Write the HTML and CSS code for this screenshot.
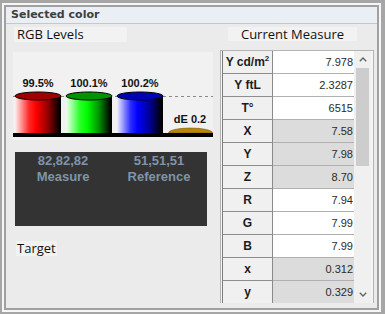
FILE: index.html
```html
<!DOCTYPE html>
<html>
<head>
<meta charset="utf-8">
<link rel="stylesheet" href="styles.css">
</head>
<body>
<div class="frame">
  <div class="panel">
    <div class="title">Selected color</div>
    <div class="content">
      <div class="left">
        <div class="label rgb">RGB Levels</div>
        <svg class="chart" width="200" height="88" viewBox="0 0 200 88">
          <defs>
            <linearGradient id="gr" x1="0" x2="1" y1="0" y2="0">
              <stop offset="0" stop-color="#ffeeee"/>
              <stop offset="0.3" stop-color="#ff2a2a"/>
              <stop offset="0.45" stop-color="#ff0000"/>
              <stop offset="0.72" stop-color="#900000"/>
              <stop offset="0.97" stop-color="#000000"/>
            </linearGradient>
            <linearGradient id="gg" x1="0" x2="1" y1="0" y2="0">
              <stop offset="0" stop-color="#eeffee"/>
              <stop offset="0.3" stop-color="#2aff2a"/>
              <stop offset="0.45" stop-color="#00ff00"/>
              <stop offset="0.72" stop-color="#009000"/>
              <stop offset="0.97" stop-color="#000000"/>
            </linearGradient>
            <linearGradient id="gb" x1="0" x2="1" y1="0" y2="0">
              <stop offset="0" stop-color="#eeeeff"/>
              <stop offset="0.3" stop-color="#2a2aff"/>
              <stop offset="0.45" stop-color="#0000ff"/>
              <stop offset="0.72" stop-color="#000090"/>
              <stop offset="0.97" stop-color="#000000"/>
            </linearGradient>
          </defs>
          <rect x="0" y="0" width="200" height="88" fill="#f1f1f1"/>
          <line x1="0" y1="44.5" x2="200" y2="44.5" stroke="#8a8a8a" stroke-width="1" stroke-dasharray="3 3"/>
          <rect x="2" y="44" width="46" height="37" fill="url(#gr)"/>
          <ellipse cx="25" cy="44" rx="23" ry="4" fill="#a00000" stroke="#000" stroke-width="1"/>
          <rect x="53" y="44" width="46" height="37" fill="url(#gg)"/>
          <ellipse cx="76" cy="44" rx="23" ry="4" fill="#009400" stroke="#000" stroke-width="1"/>
          <rect x="104" y="44" width="46" height="37" fill="url(#gb)"/>
          <ellipse cx="127" cy="44" rx="23" ry="4" fill="#0000b4" stroke="#000" stroke-width="1"/>
          <path d="M155.5 81 A22 5 0 0 1 199.5 81 Z" fill="#b8860b" stroke="#7a5a08" stroke-width="0.6"/>
          <rect x="0" y="81" width="200" height="4" fill="#000"/>
          <text class="pct" x="25" y="35" text-anchor="middle">99.5%</text>
          <text class="pct" x="76" y="35" text-anchor="middle">100.1%</text>
          <text class="pct" x="127" y="35" text-anchor="middle">100.2%</text>
          <text class="pct" x="177" y="71" text-anchor="middle">dE 0.2</text>
        </svg>
        <div class="swatch">
          <div class="sw-col"><span>82,82,82</span><span>Measure</span></div>
          <div class="sw-col"><span>51,51,51</span><span>Reference</span></div>
        </div>
        <div class="label target">Target</div>
      </div>
      <div class="right">
        <div class="label cm">Current Measure</div>
        <div class="table-wrap">
          <div class="grid">
            <div class="row"><div class="k">Y cd/m<sup>2</sup></div><div class="v">7.978</div></div>
            <div class="row"><div class="k">Y ftL</div><div class="v">2.3287</div></div>
            <div class="row"><div class="k">T°</div><div class="v">6515</div></div>
            <div class="row alt"><div class="k">X</div><div class="v">7.58</div></div>
            <div class="row alt"><div class="k">Y</div><div class="v">7.98</div></div>
            <div class="row alt"><div class="k">Z</div><div class="v">8.70</div></div>
            <div class="row"><div class="k">R</div><div class="v">7.94</div></div>
            <div class="row"><div class="k">G</div><div class="v">7.99</div></div>
            <div class="row"><div class="k">B</div><div class="v">7.99</div></div>
            <div class="row alt"><div class="k">x</div><div class="v">0.312</div></div>
            <div class="row alt"><div class="k">y</div><div class="v">0.329</div></div>
          </div>
          <div class="scroll">
            <div class="arrow"><svg width="8" height="5" viewBox="0 0 8 5"><path d="M0.8 4.2 L4 1 L7.2 4.2" fill="none" stroke="#606060" stroke-width="1.3"/></svg></div>
            <div class="track"><div class="thumb"></div></div>
            <div class="arrow"><svg width="8" height="5" viewBox="0 0 8 5"><path d="M0.8 0.8 L4 4 L7.2 0.8" fill="none" stroke="#606060" stroke-width="1.3"/></svg></div>
          </div>
        </div>
      </div>
    </div>
  </div>
</div>
</body>
</html>
```
FILE: styles.css
```css
html, body {
  margin: 0;
  padding: 0;
  width: 385px;
  height: 314px;
  overflow: hidden;
  background: #a6a6a6;
}

.frame {
  margin: 3px 4px 0 2px;
  width: 379px;
  height: 309px;
  box-sizing: border-box;
  border: 2px solid #f6f6f6;
}

.panel {
  height: 100%;
  box-sizing: border-box;
  border: 2px solid #a0a0a0;
  background: #ebebeb;
  display: flex;
  flex-direction: column;
  overflow: hidden;
}

.title {
  height: 16px;
  line-height: 16px;
  flex: none;
  background: #eaeff6;
  border-bottom: 1px solid #c4c8cc;
  padding-left: 5px;
  font-family: "DejaVu Sans", sans-serif;
  font-weight: bold;
  font-size: 11px;
  color: #3e3e3e;
}

.content {
  flex: 1;
  display: flex;
  min-height: 0;
}

.left {
  width: 210px;
  flex: none;
  display: flex;
  flex-direction: column;
  align-items: flex-start;
}

.label {
  font-family: "Open Sans", sans-serif;
  font-size: 13px;
  color: #111;
  background: #f2f2f2;
  box-sizing: border-box;
  height: 15px;
  line-height: 15px;
}

.rgb {
  margin: 3px 0 0 8px;
  width: 113px;
  padding-left: 3px;
}

.chart {
  display: block;
  margin: 10px 0 0 7px;
}

.pct {
  font-family: "Liberation Sans", sans-serif;
  font-weight: bold;
  font-size: 11px;
  fill: #111;
}

.swatch {
  margin: 12px 0 0 9px;
  width: 192px;
  height: 74px;
  background: #333333;
  display: flex;
}

.sw-col {
  flex: 1;
  display: flex;
  flex-direction: column;
  align-items: center;
  padding-top: 1px;
  font-family: "Liberation Sans", sans-serif;
  font-weight: bold;
  font-size: 13px;
  line-height: 16px;
  color: #7f93aa;
}

.target {
  margin: 15px 0 0 10px;
  padding: 0 1px;
}

.right {
  flex: 1;
  display: flex;
  flex-direction: column;
  align-items: flex-start;
}

.cm {
  margin: 3px 0 0 12px;
  width: 129px;
  text-align: center;
  height: 14px;
  line-height: 14px;
}

.table-wrap {
  margin: 9px 0 0 4px;
  width: 154px;
  height: 253px;
  box-sizing: border-box;
  border: 1px solid #b4b4b4;
  border-bottom: none;
  padding-left: 1px;
  background: #f4f4f4;
  display: flex;
  overflow: hidden;
}

.grid {
  width: 131px;
  flex: none;
  border-left: 1px solid #7c7c7c;
  display: flex;
  flex-direction: column;
}

.row {
  display: flex;
  height: 23px;
  flex: none;
}

.k {
  width: 50px;
  box-sizing: border-box;
  background: #f0f0f0;
  border-right: 1px solid #8a8a8a;
  border-bottom: 1px solid #8e8e8e;
  text-align: center;
  line-height: 22px;
  font-family: "Liberation Sans", sans-serif;
  font-weight: bold;
  font-size: 12px;
  color: #1c1c1c;
}

.k sup {
  font-size: 8px;
  line-height: 0;
  vertical-align: 5px;
}

.v {
  flex: 1;
  box-sizing: border-box;
  background: #ffffff;
  border-bottom: 1px solid #b0b0b0;
  text-align: right;
  padding-right: 1px;
  line-height: 22px;
  font-family: "Liberation Sans", sans-serif;
  font-size: 11px;
  color: #2a2a2a;
}

.alt .v {
  background: #dcdcdc;
}

.scroll {
  width: 17px;
  flex: none;
  background: #f0f0f0;
  display: flex;
  flex-direction: column;
}

.arrow {
  height: 17px;
  flex: none;
  display: flex;
  align-items: center;
  justify-content: center;
}

.arrow svg {
  display: block;
}

.track {
  flex: 1;
  padding: 0 2px;
}

.thumb {
  height: 98px;
  background: #cdcdcd;
}
```
